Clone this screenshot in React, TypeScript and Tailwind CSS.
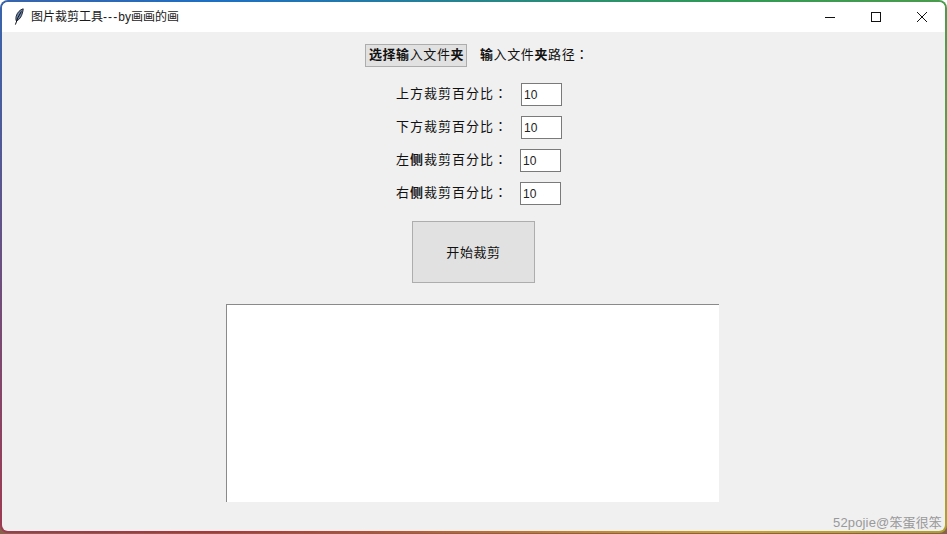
const cjk = { fontFamily: '"Liberation Sans", "Noto Sans CJK SC", sans-serif' };

function Colon() {
  return <span className="font-['Noto_Sans_CJK_TC']">：</span>;
}

function Row({ label, side, shift }: { label: string; side?: boolean; shift: boolean }) {
  return (
    <div className="flex h-[23px] items-center">
      <span className="w-[124px] pb-[3px] text-[13px] tracking-[1px] text-[#111] leading-none">
        {side ? (
          <>
            {label[0]}
            <b>{label[1]}</b>
            {label.slice(2)}
          </>
        ) : (
          label
        )}
        <Colon />
      </span>
      <div
        className={`flex h-[23px] w-[41px] items-center border border-[#7a7a7a] bg-white pl-[2px] text-[12px] text-[#222] ${
          shift ? "ml-px" : ""
        }`}
      >
        10
      </div>
    </div>
  );
}

function Feather() {
  return (
    <svg width="10" height="18" viewBox="0 0 10 18" className="shrink-0">
      <path d="M9.2 0.8C6 1.6 3.2 4.6 2.2 8.2 1.7 10 1.8 11.8 2.4 13 5.4 11.8 7.6 8.6 8.4 5 8.8 3.4 9.3 2 9.2 0.8Z" fill="#6f86a8" stroke="#141b26" strokeWidth="0.9" />
      <path d="M7.4 3.4 4 9.4 1.4 16.6" fill="none" stroke="#0d1218" strokeWidth="1" />
    </svg>
  );
}

export default function App() {
  return (
    <div
      className="h-[534px] w-[947px] overflow-hidden bg-[linear-gradient(#ffffff_90%,#86624a_90%)]"
      style={cjk}
    >
      <div className="h-[533px] w-[947px] rounded-[8px] bg-[conic-gradient(from_315deg,#1d6fc4_0deg,#2f9a55_90deg,#c9a227_180deg,#b8303a_270deg,#1d6fc4_360deg)] p-[2px]">
        <div className="flex h-full flex-col overflow-hidden rounded-[6px] bg-[#f0f0f0]">
          <div className="flex h-[30px] shrink-0 items-center bg-white pl-[12px]">
            <Feather />
            <span className="ml-[7px] text-[12px] leading-none text-[#1a1a1a]">
              图片裁剪工具<span className="tracking-[1.1px]">---</span>by画画的画
            </span>
            <div className="ml-auto flex items-center text-black">
              <svg width="46" height="30" viewBox="0 0 46 30">
                <path d="M18 15.5H28" stroke="#111" strokeWidth="1" />
              </svg>
              <svg width="46" height="30" viewBox="0 0 46 30">
                <rect x="18.5" y="10.5" width="9" height="9" fill="none" stroke="#111" strokeWidth="1" />
              </svg>
              <svg width="46" height="30" viewBox="0 0 46 30">
                <path d="M18 10L28 20M28 10L18 20" stroke="#111" strokeWidth="1" />
              </svg>
            </div>
          </div>

          <div className="relative flex flex-1 flex-col items-center">
            <div className="mt-[12px] flex h-[23px] items-center self-start pl-[363px]">
              <button className="flex h-[23px] w-[102px] items-center justify-center border border-[#adadad] bg-[#e1e1e1] pb-[2px] pl-px text-[13px] leading-none tracking-[0.6px] text-[#111]">
                <b>选择输</b>入文件<b>夹</b>
              </button>
              <span className="ml-[13px] pb-[3px] text-[13px] leading-none tracking-[0.6px] text-[#111]">
                <b>输</b>入文件<b>夹</b>路径
                <Colon />
              </span>
            </div>

            <div className="mt-[16px] flex flex-col gap-[10px] self-start pl-[394px]">
              <Row label="上方裁剪百分比" shift />
              <Row label="下方裁剪百分比" shift />
              <Row label="左侧裁剪百分比" side shift={false} />
              <Row label="右侧裁剪百分比" side shift={false} />
            </div>

            <button className="ml-[410px] mt-[16px] flex h-[62px] w-[123px] items-center justify-center self-start border border-[#adadad] bg-[#e1e1e1] text-[13px] leading-none tracking-[0.6px] text-[#111]">
              开始裁剪
            </button>

            <div className="ml-[224px] mt-[21px] h-[198px] w-[493px] self-start border-l border-t border-[#8a8a8a] bg-white" />

            <span className="absolute bottom-[2px] right-[3px] text-[13px] leading-none tracking-[0.15px] text-[#999999]">
              52pojie@笨蛋很笨
            </span>
          </div>
        </div>
      </div>
    </div>
  );
}
